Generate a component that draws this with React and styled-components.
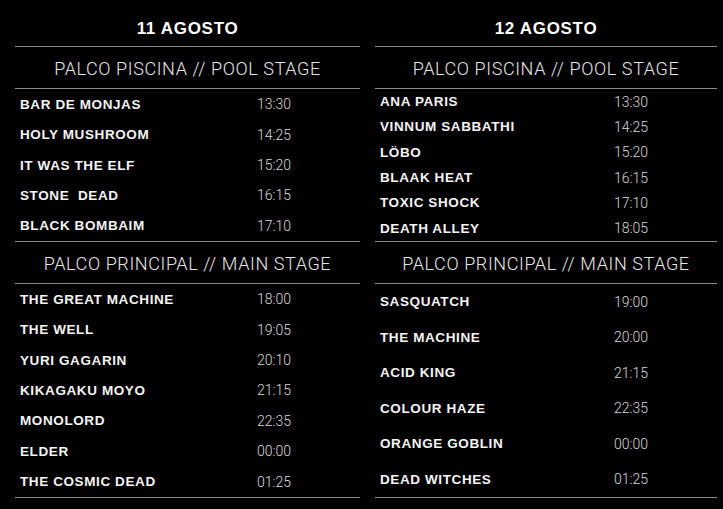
import React from "react";
import styled, { createGlobalStyle } from "styled-components";

const GlobalStyle = createGlobalStyle`
  * {
    margin: 0;
    padding: 0;
    box-sizing: border-box;
  }

  html, body {
    background: #000;
    min-height: 100vh;
  }
`;

const Page = styled.div`
  display: grid;
  grid-template-columns: 345px 342px;
  column-gap: 15px;
  padding: 0 6px 0 15px;
  width: 723px;
  height: 509px;
  background: #000;
  color: #fff;
  font-family: "Liberation Sans", Arial, sans-serif;
`;

const Day = styled.section`
  display: flex;
  flex-direction: column;
`;

const DayTitle = styled.h1`
  height: 47px;
  display: flex;
  align-items: center;
  justify-content: center;
  padding-top: 12px;
  font-size: 17px;
  font-weight: 700;
  letter-spacing: 0.7px;
  border-bottom: 1px solid #8a8a8a;
`;

const StageTitle = styled.h2`
  height: 42px;
  display: flex;
  align-items: center;
  justify-content: center;
  padding-top: 2px;
  font-family: Roboto, "Liberation Sans", sans-serif;
  font-size: 18px;
  font-weight: 300;
  letter-spacing: 0.6px;
  color: #e6e6e6;
  border-bottom: 1px solid #8a8a8a;
`;

const Slots = styled.div`
  height: ${(p) => p.$height}px;
  display: flex;
  flex-direction: column;
  border-bottom: 1px solid #8a8a8a;
`;

const Slot = styled.div`
  flex: 1;
  display: grid;
  grid-template-columns: 1fr 80px 46px;
  align-items: center;
  padding-left: 5px;
`;

const Band = styled.span`
  white-space: pre;
  font-size: 13.5px;
  font-weight: 700;
  letter-spacing: 0.6px;
  color: #f4f4f4;
`;

const Time = styled.span`
  text-align: center;
  font-family: Roboto, "Liberation Sans", sans-serif;
  font-size: 14px;
  font-weight: 300;
  color: #d8d8d8;
`;

const days = [
  {
    date: "11 AGOSTO",
    pool: [
      ["BAR DE MONJAS", "13:30"],
      ["HOLY MUSHROOM", "14:25"],
      ["IT WAS THE ELF", "15:20"],
      ["STONE  DEAD", "16:15"],
      ["BLACK BOMBAIM", "17:10"],
    ],
    main: [
      ["THE GREAT MACHINE", "18:00"],
      ["THE WELL", "19:05"],
      ["YURI GAGARIN", "20:10"],
      ["KIKAGAKU MOYO", "21:15"],
      ["MONOLORD", "22:35"],
      ["ELDER", "00:00"],
      ["THE COSMIC DEAD", "01:25"],
    ],
  },
  {
    date: "12 AGOSTO",
    pool: [
      ["ANA PARIS", "13:30"],
      ["VINNUM SABBATHI", "14:25"],
      ["LÖBO", "15:20"],
      ["BLAAK HEAT", "16:15"],
      ["TOXIC SHOCK", "17:10"],
      ["DEATH ALLEY", "18:05"],
    ],
    main: [
      ["SASQUATCH", "19:00"],
      ["THE MACHINE", "20:00"],
      ["ACID KING", "21:15"],
      ["COLOUR HAZE", "22:35"],
      ["ORANGE GOBLIN", "00:00"],
      ["DEAD WITCHES", "01:25"],
    ],
  },
];

function Stage({ title, height, lineup }) {
  return (
    <>
      <StageTitle>{title}</StageTitle>
      <Slots $height={height}>
        {lineup.map(([band, time]) => (
          <Slot key={band}>
            <Band>{band}</Band>
            <Time>{time}</Time>
          </Slot>
        ))}
      </Slots>
    </>
  );
}

export default function App() {
  return (
    <>
      <GlobalStyle />
      <Page>
        {days.map((day) => (
          <Day key={day.date}>
            <DayTitle>{day.date}</DayTitle>
            <Stage title="PALCO PISCINA // POOL STAGE" height={153} lineup={day.pool} />
            <Stage title="PALCO PRINCIPAL // MAIN STAGE" height={214} lineup={day.main} />
          </Day>
        ))}
      </Page>
    </>
  );
}
